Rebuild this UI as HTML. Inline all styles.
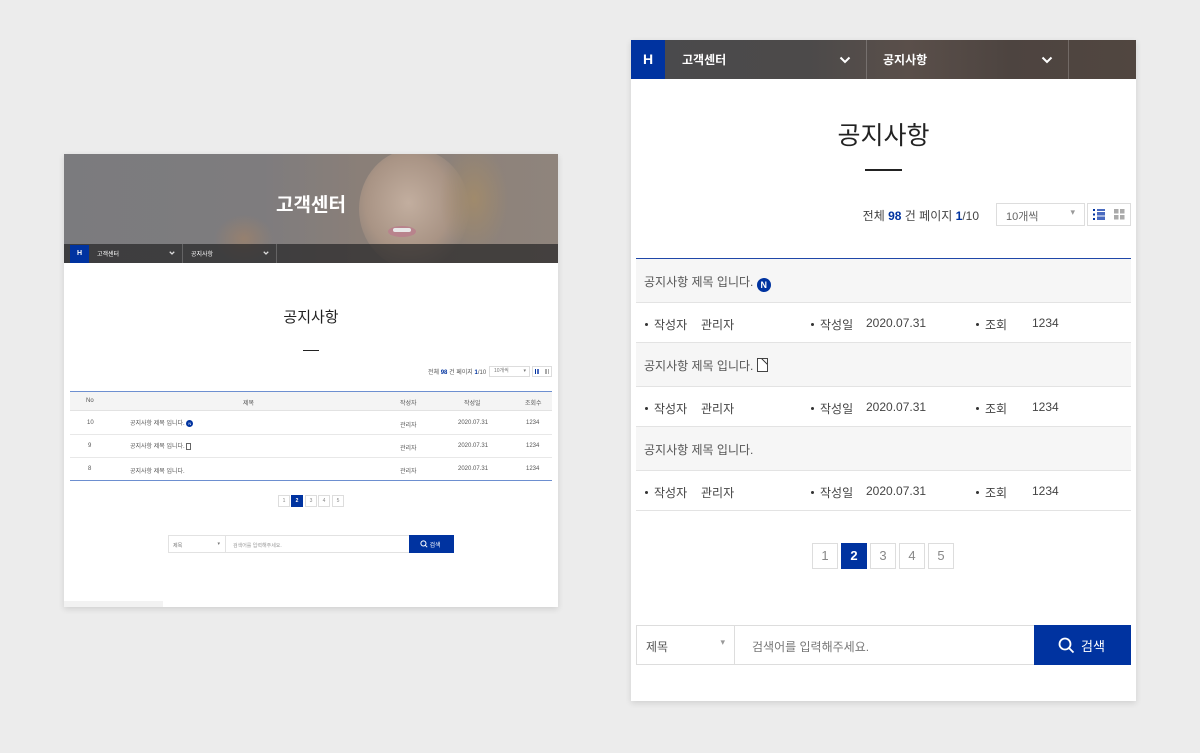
<!DOCTYPE html>
<html><head><meta charset="utf-8"><style>
*{margin:0;padding:0;box-sizing:border-box}
body{width:1200px;height:753px;background:#ececec;position:relative;overflow:hidden;font-family:"Liberation Sans","Noto Sans CJK KR",sans-serif;color:#333}
.a{position:absolute}
.t{position:absolute;white-space:nowrap}
.card{position:absolute;background:#fff;box-shadow:0 2px 6px rgba(0,0,0,.12)}
.pg{position:absolute;border:1px solid #ddd;background:#fff;color:#888;text-align:center}
.pg.on{background:#0033a0;border-color:#0033a0;color:#fff;font-weight:bold}
.b{display:inline-block;width:3px;height:3px;background:#333;border-radius:50%;vertical-align:middle;margin-right:6px;position:relative;top:-1px}
</style></head><body>

<!-- LEFT CARD -->
<div class="card" style="left:64px;top:154px;width:494px;height:453px;">
  <div class="a" style="left:0;top:0;width:494px;height:109px;overflow:hidden;background:linear-gradient(90deg,#7b7b7e 0%,#7e7c7e 40%,#8a7f78 60%,#8f847c 100%)">
    <div class="a" style="left:295px;top:-5px;width:110px;height:120px;border-radius:50%;background:radial-gradient(ellipse at 45% 45%,#c2ae9f 0%,#a99485 50%,rgba(150,130,120,0) 75%)"></div>
    <div class="a" style="left:375px;top:-10px;width:70px;height:110px;border-radius:50%;background:radial-gradient(ellipse,#a08a6c 0%,rgba(150,135,115,0) 70%)"></div>
    <div class="a" style="left:324px;top:72px;width:28px;height:11px;border-radius:50%;background:#b8838c"></div>
    <div class="a" style="left:329px;top:74px;width:18px;height:4px;background:#e8e8e8;border-radius:2px"></div>
    <div class="a" style="left:150px;top:60px;width:60px;height:50px;border-radius:50%;background:radial-gradient(ellipse,#96806f 0%,rgba(125,120,118,0) 70%)"></div>
    <div class="t" style="left:0;width:494px;text-align:center;top:36px;font-size:19px;font-weight:bold;color:#fff">고객센터</div>
    <div class="a" style="left:0;top:90px;width:494px;height:19px;background:rgba(35,35,37,.7)"></div>
    <div class="a" style="left:6px;top:91px;width:19px;height:18px;background:#0033a0;color:#fff;font-size:7px;font-weight:bold;text-align:center;line-height:18px">H</div>
    <div class="t" style="left:33px;top:95px;font-size:6px;color:#fff">고객센터</div>
    <svg class="a" style="left:105px;top:97px" width="6" height="4" viewBox="0 0 12 8"><path d="M1.5 1.5L6 6L10.5 1.5" fill="none" stroke="#ddd" stroke-width="2.5"/></svg>
    <div class="a" style="left:118px;top:90px;width:1px;height:19px;background:rgba(255,255,255,.2)"></div>
    <div class="t" style="left:127px;top:95px;font-size:6px;color:#fff">공지사항</div>
    <svg class="a" style="left:199px;top:97px" width="6" height="4" viewBox="0 0 12 8"><path d="M1.5 1.5L6 6L10.5 1.5" fill="none" stroke="#ddd" stroke-width="2.5"/></svg>
    <div class="a" style="left:212px;top:90px;width:1px;height:19px;background:rgba(255,255,255,.2)"></div>
  </div>
  <div class="t" style="left:0;width:494px;text-align:center;top:152px;font-size:15px;color:#222">공지사항</div>
  <div class="a" style="left:239px;top:196px;width:16px;height:1px;background:#222"></div>
  <div class="t" style="left:364px;top:213px;font-size:6px;color:#555">전체 <b style="color:#0033a0">98</b> 건 페이지 <b style="color:#0033a0">1</b>/10</div>
  <div class="a" style="left:425px;top:212px;width:41px;height:11px;border:1px solid #ddd;font-size:5px;color:#777;padding-left:4px;line-height:9px">10개씩<span style="position:absolute;right:3px">▾</span></div>
  <div class="a" style="left:468px;top:212px;width:20px;height:11px;border:1px solid #ddd"></div>
  <div class="a" style="left:471px;top:215px;width:4px;height:5px;border-left:1px solid #0033a0;border-right:2px solid #4a6bc0"></div>
  <div class="a" style="left:481px;top:215px;width:4px;height:5px;background:repeating-linear-gradient(90deg,#aaa 0 2px,transparent 2px 3px)"></div>
  <div class="a" style="left:6px;top:237px;width:482px;height:1px;background:#6d8fd0"></div>
  <div class="a" style="left:6px;top:238px;width:482px;height:19px;background:#f4f4f4;border-bottom:1px solid #e2e2e2;font-size:6px;color:#555">
    <span class="t" style="left:16px;top:6px">No</span><span class="t" style="left:173px;top:6px">제목</span><span class="t" style="left:330px;top:6px">작성자</span><span class="t" style="left:394px;top:6px">작성일</span><span class="t" style="left:455px;top:6px">조회수</span>
  </div>
  <div class="a" style="left:6px;top:258px;width:482px;height:68px;font-size:6px;color:#555">
    <div class="a" style="left:0;top:0;width:482px;height:23px;border-bottom:1px solid #e8e8e8"><span class="t" style="left:17px;top:8px">10</span><span class="t" style="left:60px;top:6px">공지사항 제목 입니다. <span style="display:inline-block;width:7px;height:7px;border-radius:50%;background:#0033a0;color:#fff;font-size:4px;text-align:center;line-height:7px;vertical-align:middle">N</span></span><span class="t" style="left:330px;top:8px">관리자</span><span class="t" style="left:388px;top:8px">2020.07.31</span><span class="t" style="left:456px;top:8px">1234</span></div>
    <div class="a" style="left:0;top:23px;width:482px;height:23px;border-bottom:1px solid #e8e8e8"><span class="t" style="left:18px;top:8px">9</span><span class="t" style="left:60px;top:6px">공지사항 제목 입니다. <span style="display:inline-block;width:5px;height:7px;border:1px solid #666;vertical-align:middle"></span></span><span class="t" style="left:330px;top:8px">관리자</span><span class="t" style="left:388px;top:8px">2020.07.31</span><span class="t" style="left:456px;top:8px">1234</span></div>
    <div class="a" style="left:0;top:46px;width:482px;height:22px"><span class="t" style="left:18px;top:8px">8</span><span class="t" style="left:60px;top:8px">공지사항 제목 입니다.</span><span class="t" style="left:330px;top:8px">관리자</span><span class="t" style="left:388px;top:8px">2020.07.31</span><span class="t" style="left:456px;top:8px">1234</span></div>
  </div>
  <div class="a" style="left:6px;top:326px;width:482px;height:1px;background:#6d8fd0"></div>
  <div class="pg" style="left:214px;top:341px;width:12px;height:12px;font-size:5px;line-height:10px">1</div>
  <div class="pg on" style="left:227px;top:341px;width:12px;height:12px;font-size:5px;line-height:10px">2</div>
  <div class="pg" style="left:241px;top:341px;width:12px;height:12px;font-size:5px;line-height:10px">3</div>
  <div class="pg" style="left:254px;top:341px;width:12px;height:12px;font-size:5px;line-height:10px">4</div>
  <div class="pg" style="left:268px;top:341px;width:12px;height:12px;font-size:5px;line-height:10px">5</div>
  <div class="a" style="left:104px;top:381px;width:58px;height:18px;border:1px solid #e2e2e2;font-size:5px;color:#777;padding:6px 0 0 4px">제목<span style="position:absolute;right:5px;top:5px">▾</span></div>
  <div class="a" style="left:161px;top:381px;width:185px;height:18px;border:1px solid #e2e2e2;border-left:none;font-size:5px;color:#999;padding:6px 0 0 8px">검색어를 입력해주세요.</div>
  <div class="a" style="left:345px;top:381px;width:45px;height:18px;background:#0033a0;color:#fff;font-size:6px;padding:5px 0 0 11px">
    <svg width="8" height="8" viewBox="0 0 10 10" style="vertical-align:-1px"><circle cx="4.3" cy="4.3" r="3.2" fill="none" stroke="#fff" stroke-width="1.2"/><path d="M6.6 6.6L9 9" stroke="#fff" stroke-width="1.2"/></svg> 검색</div>
  <div class="a" style="left:0;top:447px;width:99px;height:6px;background:#f2f2f2"></div>
</div>

<!-- RIGHT CARD -->
<div class="card" style="left:631px;top:40px;width:505px;height:661px;">
  <div class="a" style="left:0;top:0;width:505px;height:39px;background:linear-gradient(90deg,#4a4a4c 0%,#4c4a4a 35%,#5a4f4a 55%,#4d4440 75%,#514640 100%)">
    <div class="a" style="left:0;top:0;width:34px;height:39px;background:#0033a0;color:#fff;font-size:14px;font-weight:bold;text-align:center;line-height:39px">H</div>
    <div class="t" style="left:51px;top:11px;font-size:12px;color:#fff;font-weight:bold">고객센터</div>
    <svg class="a" style="left:208px;top:16px" width="12" height="8" viewBox="0 0 12 8"><path d="M1.5 1.5L6 6L10.5 1.5" fill="none" stroke="#fff" stroke-width="2"/></svg>
    <div class="a" style="left:235px;top:0;width:1px;height:39px;background:rgba(255,255,255,.2)"></div>
    <div class="t" style="left:252px;top:11px;font-size:12px;color:#fff;font-weight:bold">공지사항</div>
    <svg class="a" style="left:410px;top:16px" width="12" height="8" viewBox="0 0 12 8"><path d="M1.5 1.5L6 6L10.5 1.5" fill="none" stroke="#fff" stroke-width="2"/></svg>
    <div class="a" style="left:437px;top:0;width:1px;height:39px;background:rgba(255,255,255,.2)"></div>
  </div>
  <div class="t" style="left:0;width:505px;text-align:center;top:76px;font-size:25px;color:#222">공지사항</div>
  <div class="a" style="left:234px;top:129px;width:37px;height:2px;background:#222"></div>
  <div class="t" style="right:157px;top:167px;font-size:12px;color:#444">전체 <b style="color:#0033a0">98</b> 건 페이지 <b style="color:#0033a0">1</b>/10</div>
  <div class="a" style="left:365px;top:163px;width:89px;height:23px;border:1px solid #ddd;font-size:11px;color:#666;padding:4px 0 0 9px">10개씩<span style="position:absolute;right:9px;top:3px;font-size:9px;color:#999">▾</span></div>
  <div class="a" style="left:456px;top:163px;width:44px;height:23px;border:1px solid #ddd"></div>
  <svg class="a" style="left:462px;top:169px" width="12" height="11" viewBox="0 0 12 11"><g fill="#0033a0"><rect x="0" y="0" width="2" height="2"/><rect x="0" y="4.5" width="2" height="2"/><rect x="0" y="9" width="2" height="2"/></g><g fill="#4a6bc0"><rect x="4" y="0" width="8" height="2"/><rect x="4" y="3" width="8" height="1.5"/><rect x="4" y="4.5" width="8" height="2"/><rect x="4" y="7.5" width="8" height="1.5"/><rect x="4" y="9" width="8" height="2"/></g></svg>
  <svg class="a" style="left:483px;top:169px" width="11" height="11" viewBox="0 0 11 11"><g fill="#aaa"><rect x="0" y="0" width="4.5" height="4.5"/><rect x="6" y="0" width="4.5" height="4.5"/><rect x="0" y="6" width="4.5" height="4.5"/><rect x="6" y="6" width="4.5" height="4.5"/></g></svg>
  <div class="a" style="left:5px;top:218px;width:495px;height:1px;background:#1f47a8"></div>
  <div class="a" style="left:5px;top:219px;width:495px;height:252px;font-size:12px;color:#444">
    <div class="a" style="left:0;top:0;width:495px;height:44px;background:#f6f6f6;border-bottom:1px solid #e3e3e3"><span class="t" style="left:8px;top:14px;color:#555">공지사항 제목 입니다. <span style="display:inline-block;width:14px;height:14px;border-radius:50%;background:#0033a0;color:#fff;font-size:9px;font-weight:bold;text-align:center;line-height:14px;vertical-align:-2px">N</span></span></div>
    <div class="a" style="left:0;top:44px;width:495px;height:40px;border-bottom:1px solid #e3e3e3"><span class="t" style="left:9px;top:13px"><i class="b"></i>작성자</span><span class="t" style="left:65px;top:13px">관리자</span><span class="t" style="left:175px;top:13px"><i class="b"></i>작성일</span><span class="t" style="left:230px;top:13px">2020.07.31</span><span class="t" style="left:340px;top:13px"><i class="b"></i>조회</span><span class="t" style="left:396px;top:13px">1234</span></div>
    <div class="a" style="left:0;top:84px;width:495px;height:44px;background:#f6f6f6;border-bottom:1px solid #e3e3e3"><span class="t" style="left:8px;top:14px;color:#555">공지사항 제목 입니다. <span style="display:inline-block;width:11px;height:14px;border:1px solid #444;vertical-align:-2px;background:linear-gradient(225deg,#f6f6f6 3px,#444 3px,#444 4px,#fff 4px)"></span></span></div>
    <div class="a" style="left:0;top:128px;width:495px;height:40px;border-bottom:1px solid #e3e3e3"><span class="t" style="left:9px;top:13px"><i class="b"></i>작성자</span><span class="t" style="left:65px;top:13px">관리자</span><span class="t" style="left:175px;top:13px"><i class="b"></i>작성일</span><span class="t" style="left:230px;top:13px">2020.07.31</span><span class="t" style="left:340px;top:13px"><i class="b"></i>조회</span><span class="t" style="left:396px;top:13px">1234</span></div>
    <div class="a" style="left:0;top:168px;width:495px;height:44px;background:#f6f6f6;border-bottom:1px solid #e3e3e3"><span class="t" style="left:8px;top:14px;color:#555">공지사항 제목 입니다.</span></div>
    <div class="a" style="left:0;top:212px;width:495px;height:40px;border-bottom:1px solid #e3e3e3"><span class="t" style="left:9px;top:13px"><i class="b"></i>작성자</span><span class="t" style="left:65px;top:13px">관리자</span><span class="t" style="left:175px;top:13px"><i class="b"></i>작성일</span><span class="t" style="left:230px;top:13px">2020.07.31</span><span class="t" style="left:340px;top:13px"><i class="b"></i>조회</span><span class="t" style="left:396px;top:13px">1234</span></div>
  </div>
  <div class="pg" style="left:181px;top:503px;width:26px;height:26px;font-size:13px;line-height:24px">1</div>
  <div class="pg on" style="left:210px;top:503px;width:26px;height:26px;font-size:13px;line-height:24px">2</div>
  <div class="pg" style="left:239px;top:503px;width:26px;height:26px;font-size:13px;line-height:24px">3</div>
  <div class="pg" style="left:268px;top:503px;width:26px;height:26px;font-size:13px;line-height:24px">4</div>
  <div class="pg" style="left:297px;top:503px;width:26px;height:26px;font-size:13px;line-height:24px">5</div>
  <div class="a" style="left:5px;top:585px;width:99px;height:40px;border:1px solid #ddd;font-size:12px;color:#555;padding:12px 0 0 9px">제목<span style="position:absolute;right:9px;top:11px;font-size:9px;color:#999">▾</span></div>
  <div class="a" style="left:103px;top:585px;width:301px;height:40px;border:1px solid #ddd;font-size:12px;color:#777;padding:12px 0 0 17px">검색어를 입력해주세요.</div>
  <div class="a" style="left:403px;top:585px;width:97px;height:40px;background:#0033a0;color:#fff;font-size:13px;padding:11px 0 0 24px">
    <svg width="17" height="17" viewBox="0 0 17 17" style="vertical-align:-3px;margin-right:6px"><circle cx="7" cy="7" r="5.5" fill="none" stroke="#fff" stroke-width="1.8"/><path d="M11 11L15.5 15.5" stroke="#fff" stroke-width="1.8"/></svg>검색</div>
</div>
</body></html>
